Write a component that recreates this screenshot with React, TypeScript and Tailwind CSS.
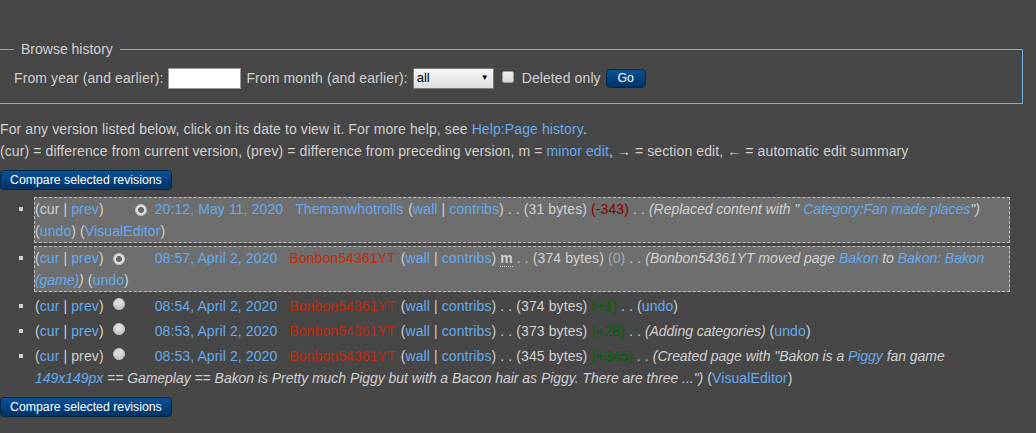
import React from "react";

const link = "text-[#66aaee]";
const red = "text-[#c42a0a]";

const L = ({ children, className = "" }: { children: React.ReactNode; className?: string }) => (
  <a className={`${link} ${className}`}>{children}</a>
);

const I = ({ children }: { children: React.ReactNode }) => <i className="tracking-[-0.04px]">{children}</i>;

const Radio = ({ checked, hidden, first }: { checked?: boolean; hidden?: boolean; first?: boolean }) => (
  <span
    className={`inline-flex items-center justify-center w-[12px] h-[12px] rounded-full align-[1px] ${
      first ? "ml-[9px]" : "ml-[10px]"
    } ${hidden ? "invisible" : ""} ${
      checked
        ? "bg-[#dedede] border border-[#bdbdbd]"
        : "bg-[#dcdcdc] border border-[#c4c4c4] shadow-[inset_0_-2px_2px_rgba(0,0,0,0.12)]"
    }`}
  >
    {checked && <span className="w-[6px] h-[6px] rounded-full bg-[#6b6b6b] border border-[#555]" />}
  </span>
);

const Hist = ({ cur, prev }: { cur: boolean; prev: boolean }) => (
  <span>
    ({cur ? <L>cur</L> : "cur"} | {prev ? <L>prev</L> : "prev"})
  </span>
);

const User = ({ name, isNew }: { name: string; isNew?: boolean }) => (
  <>
    <a className={`ml-[12px] ${isNew ? red : link}`}>{name}</a>
    <span className="ml-[5px]">
      (<L>wall</L> | <L>contribs</L>)
    </span>
  </>
);

const Row = ({
  selected,
  className = "",
  children,
}: {
  selected?: boolean;
  className?: string;
  children: React.ReactNode;
}) => (
  <li className={`flex ${className}`}>
    <span className="w-[34px] shrink-0 pl-[19px] pt-[10px]">
      <span className="block w-[4px] h-[4px] bg-[#d0d0d0]" />
    </span>
    <div
      className={`w-[976px] border leading-[22px] ${
        selected ? "border-dashed border-[#bdbdbd] bg-[#6e6e6e]" : "border-transparent"
      }`}
    >
      {children}
    </div>
  </li>
);

const CompareButton = ({ className = "" }: { className?: string }) => (
  <button
    className={`block h-[20px] px-[9px] text-[12.3px] leading-[18px] tracking-normal text-white rounded-[4px] border border-[#00284f] bg-gradient-to-b from-[#0c5296] to-[#003264] ${className}`}
  >
    Compare selected revisions
  </button>
);

export default function App() {
  return (
    <div
      className="min-h-screen bg-[#474747] text-[#d0d0d0] text-[14px] leading-[22px] tracking-[0.1px] overflow-hidden"
      style={{ fontFamily: '"Liberation Sans", Arial, sans-serif' }}
    >
      <div className="w-[1023px]">
        <fieldset className="mt-[38px] border border-l-0 border-[#75afe5] pl-[14px] pr-[14px] pb-[14px]">
          <legend className="px-[7px] leading-[22px] tracking-normal">Browse history</legend>
          <div className="flex items-center h-[22px] mt-[7px]">
            <span>From year (and earlier):</span>
            <span className="ml-[5px] w-[73px] h-[21px] bg-white border border-[#9a9a9a]" />
            <span className="ml-[5px]">From month (and earlier):</span>
            <span className="ml-[5px] w-[81px] h-[21px] flex items-center justify-between pl-[3px] pr-[4px] border border-[#7a7a7a] bg-gradient-to-b from-[#f6f6f6] to-[#dddddd] text-black text-[13px] tracking-normal">
              <span>all</span>
              <span className="text-[8px] leading-none">▼</span>
            </span>
            <span className="ml-[8px] w-[12px] h-[12px] rounded-[2px] border border-[#9d9d9d] bg-gradient-to-b from-[#f0f0f0] to-[#d8d8d8] -mt-[3px]" />
            <span className="ml-[8px]">Deleted only</span>
            <button className="ml-[5px] h-[19px] w-[40px] text-[12.3px] leading-[17px] tracking-normal text-white rounded-[4px] border border-[#00284f] bg-gradient-to-b from-[#0c5296] to-[#003264]">
              Go
            </button>
          </div>
        </fieldset>

        <p className="mt-[14px]">
          For any version listed below, click on its date to view it. For more help, see <L>Help:Page history</L>.
        </p>
        <p>
          (cur) = difference from current version, (prev) = difference from preceding version, m ={" "}
          <L>minor edit</L>, → = section edit, ← = automatic edit summary
        </p>

        <CompareButton className="mt-[8px]" />

        <ul className="mt-[7px]">
          <Row selected className="mb-[3px]">
            <Hist cur={false} prev />
            <Radio hidden first />
            <Radio checked />
            <L className="ml-[8px]">20:12, May 11, 2020</L>
            <User name="Themanwhotrolls" /> . . (31 bytes) <span className="text-[#8b0000]">(-343)</span> . .{" "}
            <I>
              (Replaced content with " <L>Category:Fan made places</L>")
            </I>{" "}
            (<L>undo</L>) (<L>VisualEditor</L>)
          </Row>
          <Row selected className="mb-[2px]">
            <Hist cur prev />
            <Radio checked first />
            <Radio hidden />
            <L className="ml-[8px]">08:57, April 2, 2020</L>
            <User name="Bonbon54361YT" isNew />{" "}
            <abbr className="font-bold no-underline border-b border-dotted border-[#d0d0d0]">m</abbr> . . (374
            bytes) <span className="text-[#a2a9b1]">(0)</span> . .{" "}
            <I>
              (Bonbon54361YT moved page <L>Bakon</L> to <L>Bakon: Bakon (game)</L>)
            </I>{" "}
            (<L>undo</L>)
          </Row>
          <Row className="mb-[1px]">
            <Hist cur prev />
            <Radio first />
            <Radio hidden />
            <L className="ml-[8px]">08:54, April 2, 2020</L>
            <User name="Bonbon54361YT" isNew /> . . (374 bytes) <span className="text-[#006400]">(+1)</span> . . (
            <L>undo</L>)
          </Row>
          <Row className="mb-[1px]">
            <Hist cur prev />
            <Radio first />
            <Radio hidden />
            <L className="ml-[8px]">08:53, April 2, 2020</L>
            <User name="Bonbon54361YT" isNew /> . . (373 bytes) <span className="text-[#006400]">(+28)</span> . .{" "}
            <I>(Adding categories)</I> (<L>undo</L>)
          </Row>
          <Row>
            <Hist cur prev={false} />
            <Radio first />
            <Radio hidden />
            <L className="ml-[8px]">08:53, April 2, 2020</L>
            <User name="Bonbon54361YT" isNew /> . . (345 bytes) <span className="text-[#006400]">(+345)</span> . .{" "}
            <I>
              (Created page with "Bakon is a <L>Piggy</L> fan game <L>149x149px</L> == Gameplay == Bakon is Pretty much
              Piggy but with a Bacon hair as Piggy. There are three ...")
            </I>{" "}
            (<L>VisualEditor</L>)
          </Row>
        </ul>

        <CompareButton className="mt-[7px]" />
      </div>
    </div>
  );
}
